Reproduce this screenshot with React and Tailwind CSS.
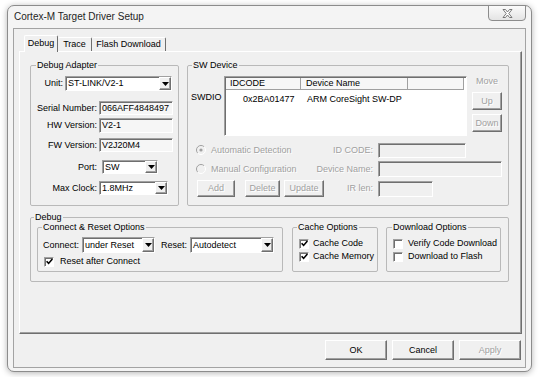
import React from "react"

// classic 3D borders
const raised =
  "border border-t-white border-l-white border-r-[#6f6f6f] border-b-[#6f6f6f] shadow-[inset_-1px_-1px_0_#a0a0a0]"
const sunken =
  "border border-t-[#a0a0a0] border-l-[#a0a0a0] border-r-white border-b-white shadow-[inset_1px_1px_0_#6f6f6f]"
const dim = "text-[#a0a0a0] [text-shadow:1px_1px_0_#fff]"
const group = "border border-[#b9b9b9] rounded-[2px] min-w-0"

function Arrow() {
  return (
    <svg width="7" height="4" viewBox="0 0 7 4">
      <path d="M0 0h7L3.5 4z" fill="#000" />
    </svg>
  )
}

function Select({ value, className }) {
  return (
    <div className={`flex bg-white ${sunken} ${className}`}>
      <span className="flex-1 pl-[2px] flex items-center whitespace-nowrap overflow-hidden">{value}</span>
      <span className={`w-[12px] bg-[#f0f0f0] flex items-center justify-center ${raised}`}>
        <Arrow />
      </span>
    </div>
  )
}

function Field({ value, className, off }) {
  return (
    <div
      className={`flex items-center pl-[2px] whitespace-nowrap overflow-hidden ${sunken} ${
        off ? "bg-[#f0f0f0]" : "bg-[#f6f6f6]"
      } ${className}`}
    >
      {value}
    </div>
  )
}

function Check({ on, label, gap }) {
  return (
    <div className="flex items-center h-[13px]">
      <span className={`w-[10px] h-[10px] bg-white flex items-center justify-center ${sunken}`}>
        {on && (
          <svg width="7" height="7" viewBox="0 0 7 7">
            <path d="M0.6 3.2L2.6 5.4L6.4 1" stroke="#000" strokeWidth="1.6" fill="none" />
          </svg>
        )}
      </span>
      <span className={gap}>{label}</span>
    </div>
  )
}

function Radio({ on, label }) {
  return (
    <div className="flex items-center">
      <svg width="10" height="10" viewBox="0 0 10 10">
        <circle cx="5" cy="5" r="4.5" fill="#f0f0f0" />
        <path d="M8.2 1.8A4.5 4.5 0 0 0 1.8 8.2" stroke="#a0a0a0" fill="none" />
        <path d="M8.2 1.8A4.5 4.5 0 0 1 1.8 8.2" stroke="#ffffff" fill="none" />
        {on && <circle cx="5" cy="5" r="1.6" fill="#a0a0a0" />}
      </svg>
      <span className={`ml-[5px] whitespace-nowrap ${dim}`}>{label}</span>
    </div>
  )
}

function Btn({ children, className, off }) {
  return (
    <div className={`flex items-center justify-center bg-[#f0f0f0] ${raised} ${off ? dim : ""} ${className}`}>
      {children}
    </div>
  )
}

function Group({ title, className, legendClass, children }) {
  return (
    <fieldset className={`${group} ${className}`}>
      <legend className={`px-[1px] leading-[11px] ${legendClass}`}>{title}</legend>
      {children}
    </fieldset>
  )
}

export default function App() {
  return (
    <div className="w-[540px] h-[377px] bg-white overflow-hidden pl-[7px] pt-[5px] font-['Liberation_Sans',Arial,sans-serif] text-[9px] leading-[11px] text-black">
      <div className="w-[525px] h-[367px] rounded-[7px] border border-[#8c8c8c] bg-[#f4f4f4] shadow-[0_1px_6px_rgba(0,0,0,0.3)] flex flex-col px-[5px] pb-[3px]">
        {/* title bar */}
        <div className="h-[22px] flex items-start justify-between">
          <span className="text-[10px] leading-[12px] mt-[5px] ml-[1px] text-[#1e1e1e]">Cortex-M Target Driver Setup</span>
          <div className="-mt-[1px] w-[38px] h-[16px] rounded-b-[4px] border border-[#8c8c8c] bg-gradient-to-b from-[#fbfbfb] to-[#e4e4e4] flex items-center justify-center">
            <svg width="11" height="9" viewBox="0 0 11 9">
              <path
                d="M1 0.5h2.5L5.5 3L7.5 0.5H10L6.8 4.5L10 8.5H7.5L5.5 6L3.5 8.5H1L4.2 4.5Z"
                fill="#fff"
                stroke="#6b6b6b"
                strokeWidth="0.9"
              />
            </svg>
          </div>
        </div>

        {/* client area */}
        <div className="flex-1 border border-[#a3a3a3] bg-[#f0f0f0] flex flex-col pl-[5px] pr-[3px] pt-[6px]">
          {/* tabs */}
          <div className="flex items-end h-[16px] ml-[5px]">
            <div className="relative h-[17px] w-[34px] -mb-[1px] bg-[#f0f0f0] border-t border-l border-r border-t-white border-l-white border-r-[#6f6f6f] rounded-t-[2px] flex justify-center pt-[2px]">
              Debug
            </div>
            <div className="h-[14px] w-[34px] border-t border-r border-t-white border-r-[#6f6f6f] rounded-t-[2px] flex justify-center pt-[1px]">
              Trace
            </div>
            <div className="h-[14px] w-[74px] border-t border-r border-t-white border-r-[#6f6f6f] rounded-t-[2px] flex justify-center pt-[1px]">
              Flash Download
            </div>
          </div>

          {/* tab page */}
          <div className={`h-[283px] bg-[#f0f0f0] ${raised} pl-[10px] pt-[8px]`}>
            <div className="flex gap-[8px]">
              {/* Debug Adapter */}
              <Group title="Debug Adapter" className="w-[149px] h-[146px]" legendClass="ml-[5px]">
                <div className="flex flex-col pt-[5px]">
                  <div className="flex items-center h-[15px]">
                    <span className="w-[32px] text-right">Unit:</span>
                    <Select value="ST-LINK/V2-1" className="ml-[2px] w-[107px] h-[15px]" />
                  </div>
                  <div className="flex items-center h-[14px] mt-[10px]">
                    <span className="w-[66px] text-right">Serial Number:</span>
                    <Field value="066AFF4848497" className="ml-[2px] w-[74px] h-[14px]" />
                  </div>
                  <div className="flex items-center h-[15px] mt-[3px]">
                    <span className="w-[66px] text-right">HW Version:</span>
                    <Field value="V2-1" className="ml-[2px] w-[74px] h-[15px]" />
                  </div>
                  <div className="flex items-center h-[14px] mt-[5px]">
                    <span className="w-[66px] text-right">FW Version:</span>
                    <Field value="V2J20M4" className="ml-[2px] w-[74px] h-[14px]" />
                  </div>
                  <div className="flex items-center h-[14px] mt-[8px]">
                    <span className="w-[66px] text-right">Port:</span>
                    <Select value="SW" className="ml-[5px] w-[56px] h-[14px]" />
                  </div>
                  <div className="flex items-center h-[14px] mt-[7px]">
                    <span className="w-[66px] text-right">Max Clock:</span>
                    <Select value="1.8MHz" className="ml-[2px] w-[69px] h-[14px]" />
                  </div>
                </div>
              </Group>

              {/* SW Device */}
              <Group title="SW Device" className="w-[322px] h-[146px]" legendClass="ml-[4px]">
                <div className="flex pt-[5px] pl-[3px]">
                  <span className="w-[33px] mt-[16px]">SWDIO</span>
                  <div className={`w-[243px] h-[60px] bg-white ${sunken} flex flex-col`}>
                    <div className="flex h-[13px] pl-[1px] pt-[1px]">
                      <div className="w-[75px] bg-[#f7f7f7] border-r border-b border-[#a0a0a0] pl-[4px]">IDCODE</div>
                      <div className="w-[107px] bg-[#f7f7f7] border-r border-b border-[#a0a0a0] pl-[5px]">Device Name</div>
                      <div className="w-[56px] bg-[#f7f7f7] border-r border-b border-[#a0a0a0]" />
                    </div>
                    <div className="flex mt-[4px] pl-[1px]">
                      <span className="w-[75px] pl-[17px]">0x2BA01477</span>
                      <span className="pl-[6px]">ARM CoreSight SW-DP</span>
                    </div>
                  </div>
                  <div className="ml-[5px] w-[30px] flex flex-col">
                    <span className={`h-[12px] text-center ${dim}`}>Move</span>
                    <Btn off className="mt-[4px] h-[18px]">Up</Btn>
                    <Btn off className="mt-[4px] h-[18px]">Down</Btn>
                  </div>
                </div>

                <div className="flex items-center h-[16px] mt-[6px]">
                  <div className="w-[120px] pl-[8px]">
                    <Radio on label="Automatic Detection" />
                  </div>
                  <span className={`w-[65px] text-right ${dim}`}>ID CODE:</span>
                  <Field off value="" className="ml-[5px] w-[88px] h-[15px]" />
                </div>
                <div className="flex items-center h-[16px] mt-[3px]">
                  <div className="w-[120px] pl-[8px]">
                    <Radio label="Manual Configuration" />
                  </div>
                  <span className={`w-[65px] text-right whitespace-nowrap ${dim}`}>Device Name:</span>
                  <Field off value="" className="ml-[5px] w-[124px] h-[16px]" />
                </div>
                <div className="flex items-center h-[17px] mt-[3px]">
                  <div className="w-[140px] pl-[9px] flex">
                    <Btn off className="w-[38px] h-[17px]">Add</Btn>
                    <Btn off className="ml-[10px] w-[35px] h-[17px]">Delete</Btn>
                    <Btn off className="ml-[4px] w-[40px] h-[17px]">Update</Btn>
                  </div>
                  <span className={`w-[45px] text-right ${dim}`}>IR len:</span>
                  <Field off value="" className="ml-[5px] w-[55px] h-[16px]" />
                </div>
              </Group>
            </div>

            {/* Debug */}
            <Group title="Debug" className="mt-[6px] w-[479px] h-[70px]" legendClass="ml-[3px]">
              <div className="flex pl-[6px]">
                <Group title="Connect & Reset Options" className="w-[246px] h-[50px] -mt-[1px]" legendClass="ml-[4px]">
                  <div className="flex items-center h-[16px] mt-[4px] pl-[5px]">
                    <span>Connect:</span>
                    <Select value="under Reset" className="ml-[3px] w-[73px] h-[16px]" />
                    <span className="ml-[6px]">Reset:</span>
                    <Select value="Autodetect" className="ml-[3px] w-[84px] h-[16px]" />
                  </div>
                  <div className="mt-[2px] pl-[6px]">
                    <Check on label="Reset after Connect" gap="ml-[6px]" />
                  </div>
                </Group>
                <Group title="Cache Options" className="ml-[9px] w-[86px] h-[50px] -mt-[1px]" legendClass="ml-[4px]">
                  <div className="flex flex-col pl-[6px] pt-[4px]">
                    <Check on label="Cache Code" gap="ml-[4px]" />
                    <Check on label="Cache Memory" gap="ml-[4px]" />
                  </div>
                </Group>
                <Group title="Download Options" className="ml-[8px] w-[115px] h-[50px] -mt-[1px]" legendClass="ml-[5px]">
                  <div className="flex flex-col pl-[6px] pt-[4px]">
                    <Check label="Verify Code Download" gap="ml-[5px]" />
                    <Check label="Download to Flash" gap="ml-[5px]" />
                  </div>
                </Group>
              </div>
            </Group>
          </div>

          {/* dialog buttons */}
          <div className="flex justify-end gap-[5px] mt-[6px] pr-[1px]">
            <Btn className="w-[62px] h-[20px]">OK</Btn>
            <Btn className="w-[62px] h-[20px]">Cancel</Btn>
            <Btn off className="w-[62px] h-[20px]">Apply</Btn>
          </div>
        </div>
      </div>
    </div>
  )
}
